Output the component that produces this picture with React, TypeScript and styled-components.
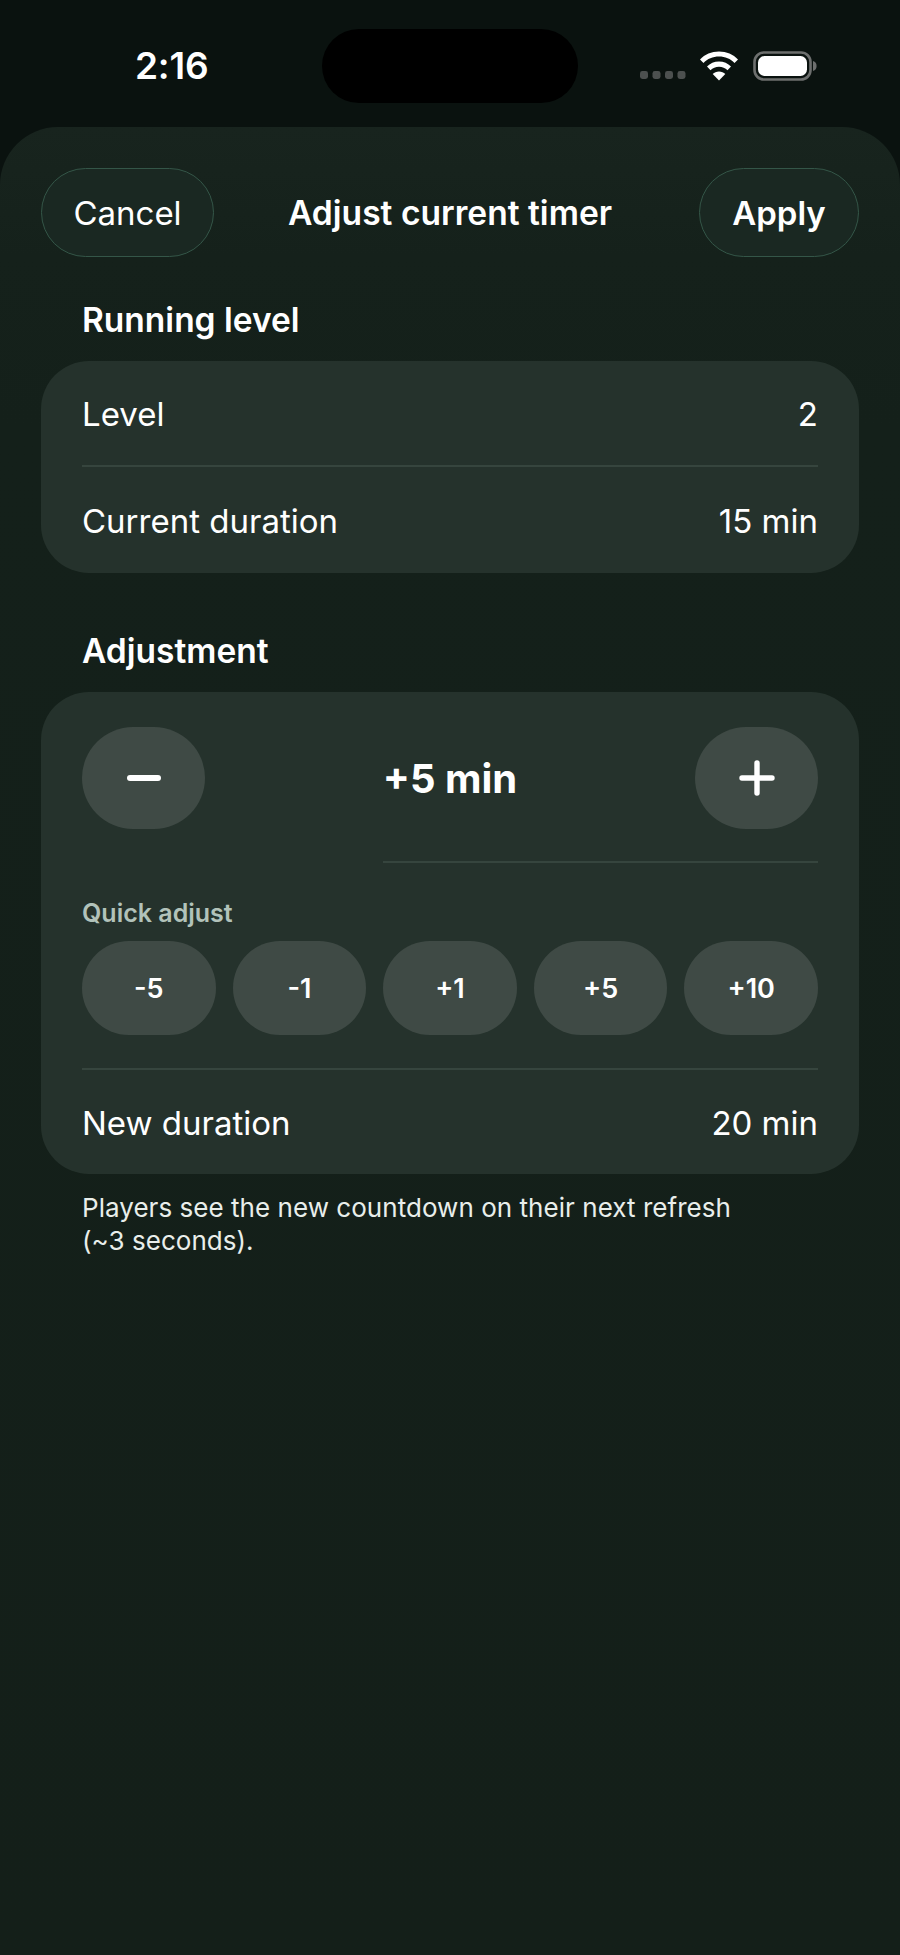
import React from "react";
import styled, { createGlobalStyle } from "styled-components";

const Global = createGlobalStyle`
  html, body { margin: 0; padding: 0; background: #0a120f; }
  * { box-sizing: border-box; }
  #root { width: 900px; height: 1955px; }
`;
const Page = styled.div`
  width: 900px; height: 1955px; overflow: hidden;
  display: flex; flex-direction: column;
  background: #0a120f;
  font-family: Inter, "Liberation Sans", sans-serif;
  color: #fff;
  -webkit-font-smoothing: antialiased;
`;
const StatusBar = styled.div`
  height: 127px; flex: none; position: relative;
  display: flex; align-items: flex-start; justify-content: space-between;
  padding: 44px 83px 0 135px;
`;
const Time = styled.div`
  font-size: 37px; font-weight: 600; line-height: 44px; letter-spacing: -0.2px;
`;
const Island = styled.div`
  position: absolute; left: 322px; top: 29px; width: 256px; height: 74px;
  border-radius: 37px; background: #000;
`;
const StatusIcons = styled.div`
  display: flex; align-items: center; gap: 14px; height: 44px;
`;
const Sheet = styled.div`
  flex: 1; display: flex; flex-direction: column;
  border-radius: 58px 58px 0 0;
  background: linear-gradient(180deg, #18241e 0, #15211b 130px, #14201a 300px, #141f19 100%);
  padding: 41px 41px 0;
`;
const Nav = styled.div`
  display: grid; grid-template-columns: 1fr auto 1fr; align-items: center; height: 89px;
`;
const NavButton = styled.div<{ $w: number; $bold?: boolean; $end?: boolean }>`
  width: ${p => p.$w}px; height: 89px; border-radius: 45px;
  justify-self: ${p => (p.$end ? "end" : "start")};
  display: flex; align-items: center; justify-content: center;
  background: #1a2822;
  border: 1.5px solid #345648;
  font-size: 33px; font-weight: ${p => (p.$bold ? 600 : 400)};
`;
const NavTitle = styled.div`
  font-size: 33.6px; font-weight: 600;
`;
const SectionTitle = styled.div<{ $top: number }>`
  margin-top: ${p => p.$top}px; padding-left: 41px;
  font-size: 33.5px; line-height: 40px; font-weight: 600; height: 40px;
`;
const Card = styled.div`
  margin-top: 21px;
  border-radius: 48px; background: #25322c; padding: 0 41px;
  display: flex; flex-direction: column;
`;
const Row = styled.div<{ $h: number }>`
  height: ${p => p.$h}px; display: flex; align-items: center; justify-content: space-between;
  padding-top: 2px;
  font-size: 33px; font-weight: 400;
`;
const Divider = styled.div<{ $indent?: number }>`
  height: 2px; flex: none; background: #36453e; margin-left: ${p => p.$indent ?? 0}px;
`;
const Stepper = styled.div`
  display: flex; align-items: center; justify-content: space-between;
  padding-top: 35px; padding-bottom: 32px;
`;
const StepButton = styled.div`
  width: 123px; height: 102px; border-radius: 51px; background: #3f4a45;
  display: flex; align-items: center; justify-content: center;
`;
const StepValue = styled.div`
  font-size: 40px; font-weight: 700;
`;
const QuickLabel = styled.div`
  margin-top: 35px; font-size: 25px; line-height: 30px; font-weight: 600; color: #b2c2ba;
`;
const Chips = styled.div`
  margin-top: 13px; margin-bottom: 33px;
  display: grid; grid-template-columns: repeat(5, 1fr); gap: 17px;
`;
const Chip = styled.div`
  height: 94px; border-radius: 47px; background: #3f4a45;
  display: flex; align-items: center; justify-content: center;
  font-size: 27px; font-weight: 600;
`;
const Note = styled.div`
  margin-top: 17px; padding-left: 41px; padding-right: 100px;
  font-size: 26px; line-height: 33px; color: #e9eeeb; letter-spacing: 0.04px;
`;
const SignalIcon = styled.svg`
  margin-top: 17px; margin-right: -1px;
`;

const Wifi = () => (
  <svg width="40" height="30" viewBox="0 0 40 30">
    <path d="M20 0.5C12.5 0.5 5.8 3.5 1 8.4l3.5 3.6C8.4 8 13.9 5.6 20 5.6s11.6 2.4 15.5 6.4L39 8.4C34.2 3.5 27.5 0.5 20 0.5z" fill="#fff" />
    <path d="M20 10.6c-4.7 0-9 1.9-12 5l3.5 3.6c2.2-2.2 5.2-3.5 8.5-3.5s6.3 1.3 8.5 3.5l3.5-3.6c-3-3.1-7.3-5-12-5z" fill="#fff" />
    <path d="M20 20.4c-2.5 0-4.7 1-6.3 2.6L20 29.5l6.3-6.5c-1.6-1.6-3.8-2.6-6.3-2.6z" fill="#fff" />
  </svg>
);
const Battery = () => (
  <svg width="64" height="30" viewBox="0 0 64 30">
    <rect x="1.5" y="1.5" width="56" height="27" rx="9.5" fill="none" stroke="#6d6f6e" strokeWidth="2.6" />
    <rect x="5" y="5" width="49" height="20" rx="6.5" fill="#fff" />
    <path d="M60 10c2.4.5 3.6 2.4 3.6 5s-1.2 4.5-3.6 5z" fill="#6d6f6e" />
  </svg>
);
const Signal = () => (
  <SignalIcon width="46" height="10" viewBox="0 0 46 10">
    {[0, 12.5, 25, 37.5].map(x => <rect key={x} x={x} y="1" width="8" height="8" rx="2.4" fill="#4c504f" />)}
  </SignalIcon>
);

export default function App() {
  return (
    <Page>
      <Global />
      <StatusBar>
        <Time>2:16</Time>
        <Island />
        <StatusIcons>
          <Signal />
          <Wifi />
          <Battery />
        </StatusIcons>
      </StatusBar>
      <Sheet>
        <Nav>
          <NavButton $w={173}>Cancel</NavButton>
          <NavTitle>Adjust current timer</NavTitle>
          <NavButton $w={160} $bold $end>Apply</NavButton>
        </Nav>
        <SectionTitle $top={43}>Running level</SectionTitle>
        <Card>
          <Row $h={104}><span>Level</span><span>2</span></Row>
          <Divider />
          <Row $h={106}><span>Current duration</span><span>15 min</span></Row>
        </Card>
        <SectionTitle $top={58}>Adjustment</SectionTitle>
        <Card>
          <Stepper>
            <StepButton>
              <svg width="36" height="8" viewBox="0 0 36 8"><rect x="1" y="1" width="34" height="6" rx="3" fill="#fff" /></svg>
            </StepButton>
            <StepValue>+5 min</StepValue>
            <StepButton>
              <svg width="36" height="36" viewBox="0 0 36 36"><path d="M18 3v30M3 18h30" stroke="#fff" strokeWidth="5.4" strokeLinecap="round" /></svg>
            </StepButton>
          </Stepper>
          <Divider $indent={301} />
          <QuickLabel>Quick adjust</QuickLabel>
          <Chips>
            {["-5", "-1", "+1", "+5", "+10"].map(c => <Chip key={c}>{c}</Chip>)}
          </Chips>
          <Divider />
          <Row $h={104}><span>New duration</span><span>20 min</span></Row>
        </Card>
        <Note>Players see the new countdown on their next refresh (~3 seconds).</Note>
      </Sheet>
    </Page>
  );
}
